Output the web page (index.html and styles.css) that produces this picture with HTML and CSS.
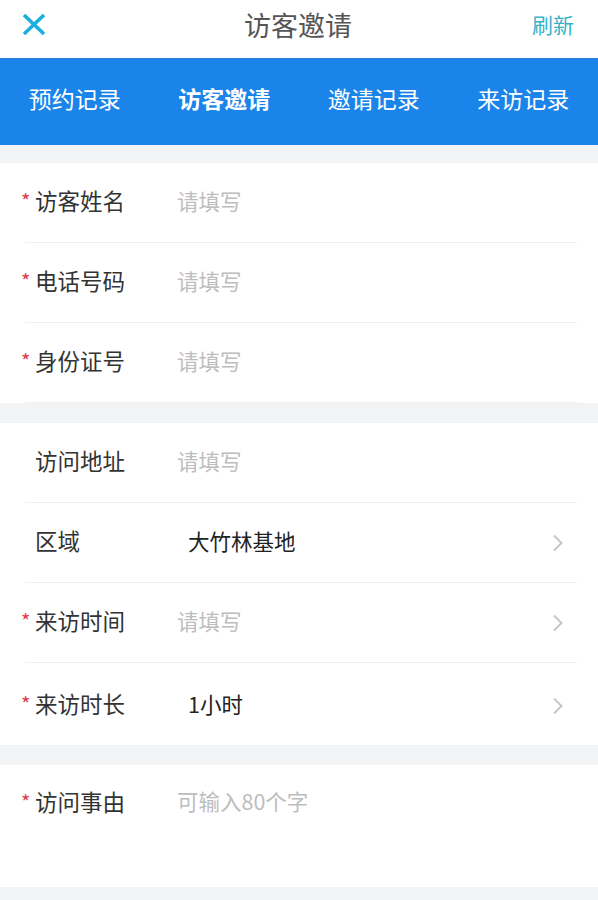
FILE: index.html
```html
<!DOCTYPE html>
<html lang="zh-CN">
<head>
<meta charset="utf-8">
<title>访客邀请</title>
<link rel="stylesheet" href="styles.css">
</head>
<body>
<header class="topbar">
  <span class="close">
    <svg width="24" height="21" viewBox="0 0 24 21"><path d="M2 1 L22 20 M22 1 L2 20" stroke="#1aafdf" stroke-width="3.6" stroke-linecap="butt" fill="none"/></svg>
  </span>
  <h1 class="title">访客邀请</h1>
  <span class="refresh">刷新</span>
</header>
<nav class="tabs">
  <span class="tab">预约记录</span>
  <span class="tab active">访客邀请</span>
  <span class="tab">邀请记录</span>
  <span class="tab">来访记录</span>
</nav>
<main class="page">
  <section class="group">
    <div class="row"><span class="label"><i class="req">*</i>访客姓名</span><span class="ph">请填写</span></div>
    <div class="row"><span class="label"><i class="req">*</i>电话号码</span><span class="ph">请填写</span></div>
    <div class="row"><span class="label"><i class="req">*</i>身份证号</span><span class="ph">请填写</span></div>
  </section>
  <section class="group">
    <div class="row"><span class="label">访问地址</span><span class="ph">请填写</span></div>
    <div class="row"><span class="label">区域</span><span class="val">大竹林基地</span><span class="chev"><svg width="12" height="18" viewBox="0 0 12 18"><path d="M2 1.5 L9.5 9 L2 16.5" stroke="#c6c6c6" stroke-width="2" fill="none"/></svg></span></div>
    <div class="row"><span class="label"><i class="req">*</i>来访时间</span><span class="ph">请填写</span><span class="chev"><svg width="12" height="18" viewBox="0 0 12 18"><path d="M2 1.5 L9.5 9 L2 16.5" stroke="#c6c6c6" stroke-width="2" fill="none"/></svg></span></div>
    <div class="row last"><span class="label"><i class="req">*</i>来访时长</span><span class="val">1小时</span><span class="chev"><svg width="12" height="18" viewBox="0 0 12 18"><path d="M2 1.5 L9.5 9 L2 16.5" stroke="#c6c6c6" stroke-width="2" fill="none"/></svg></span></div>
  </section>
  <section class="group reason">
    <div class="row area"><span class="label"><i class="req">*</i>访问事由</span><span class="ph">可输入80个字</span></div>
  </section>
</main>
</body>
</html>
```
FILE: styles.css
```css
* { box-sizing: border-box; margin: 0; padding: 0; }
body {
  font-family: "Noto Sans CJK SC", "Noto Sans", sans-serif;
  background: #f2f3f5;
  width: 598px;
  height: 900px;
  overflow: hidden;
}
.topbar {
  height: 58px;
  background: #fff;
  display: flex;
  align-items: center;
  justify-content: space-between;
  padding: 0 24px 0 22px;
}
.close { display: flex; width: 60px; margin-top: -10px; }
.title {
  font-size: 27px;
  font-weight: 400;
  color: #555;
  margin-top: -10px;
}
.refresh {
  width: 60px;
  text-align: right;
  font-size: 21px;
  color: #35b2c9;
  margin-top: -10px;
}
.tabs {
  height: 87px;
  background: #1a84ea;
  display: grid;
  grid-template-columns: repeat(4, 1fr);
  align-items: center;
  border-top: 1px solid #2a7fd0;
}
.tab {
  text-align: center;
  color: #fff;
  font-size: 23px;
  padding-bottom: 8px;
}
.tab.active { font-weight: 700; }
.page { padding-top: 18px; }
.group {
  background: #fff;
  margin-bottom: 20px;
}
.row {
  height: 80px;
  display: flex;
  align-items: center;
  padding-bottom: 5px;
  margin: 0 21px 0 25px;
  border-bottom: 1px solid #f0f0f2;
}
.row.last { border-bottom: none; height: 82px; padding-bottom: 2px; }
.label {
  width: 152px;
  padding-left: 10px;
  font-size: 22.5px;
  color: #333;
  position: relative;
}
.req {
  position: absolute;
  left: -4px;
  top: 2px;
  font-style: normal;
  color: #e03b4b;
  font-size: 20px;
}
.ph { font-size: 21.5px; color: #bdbdbd; }
.val { font-size: 21.5px; color: #222; padding-left: 11px; }
.chev { margin-left: auto; margin-right: 13px; display: flex; padding-top: 5px; }
.reason { height: 122px; }
.area { align-items: flex-start; padding-top: 20px; border-bottom: none; height: 122px; }
```
